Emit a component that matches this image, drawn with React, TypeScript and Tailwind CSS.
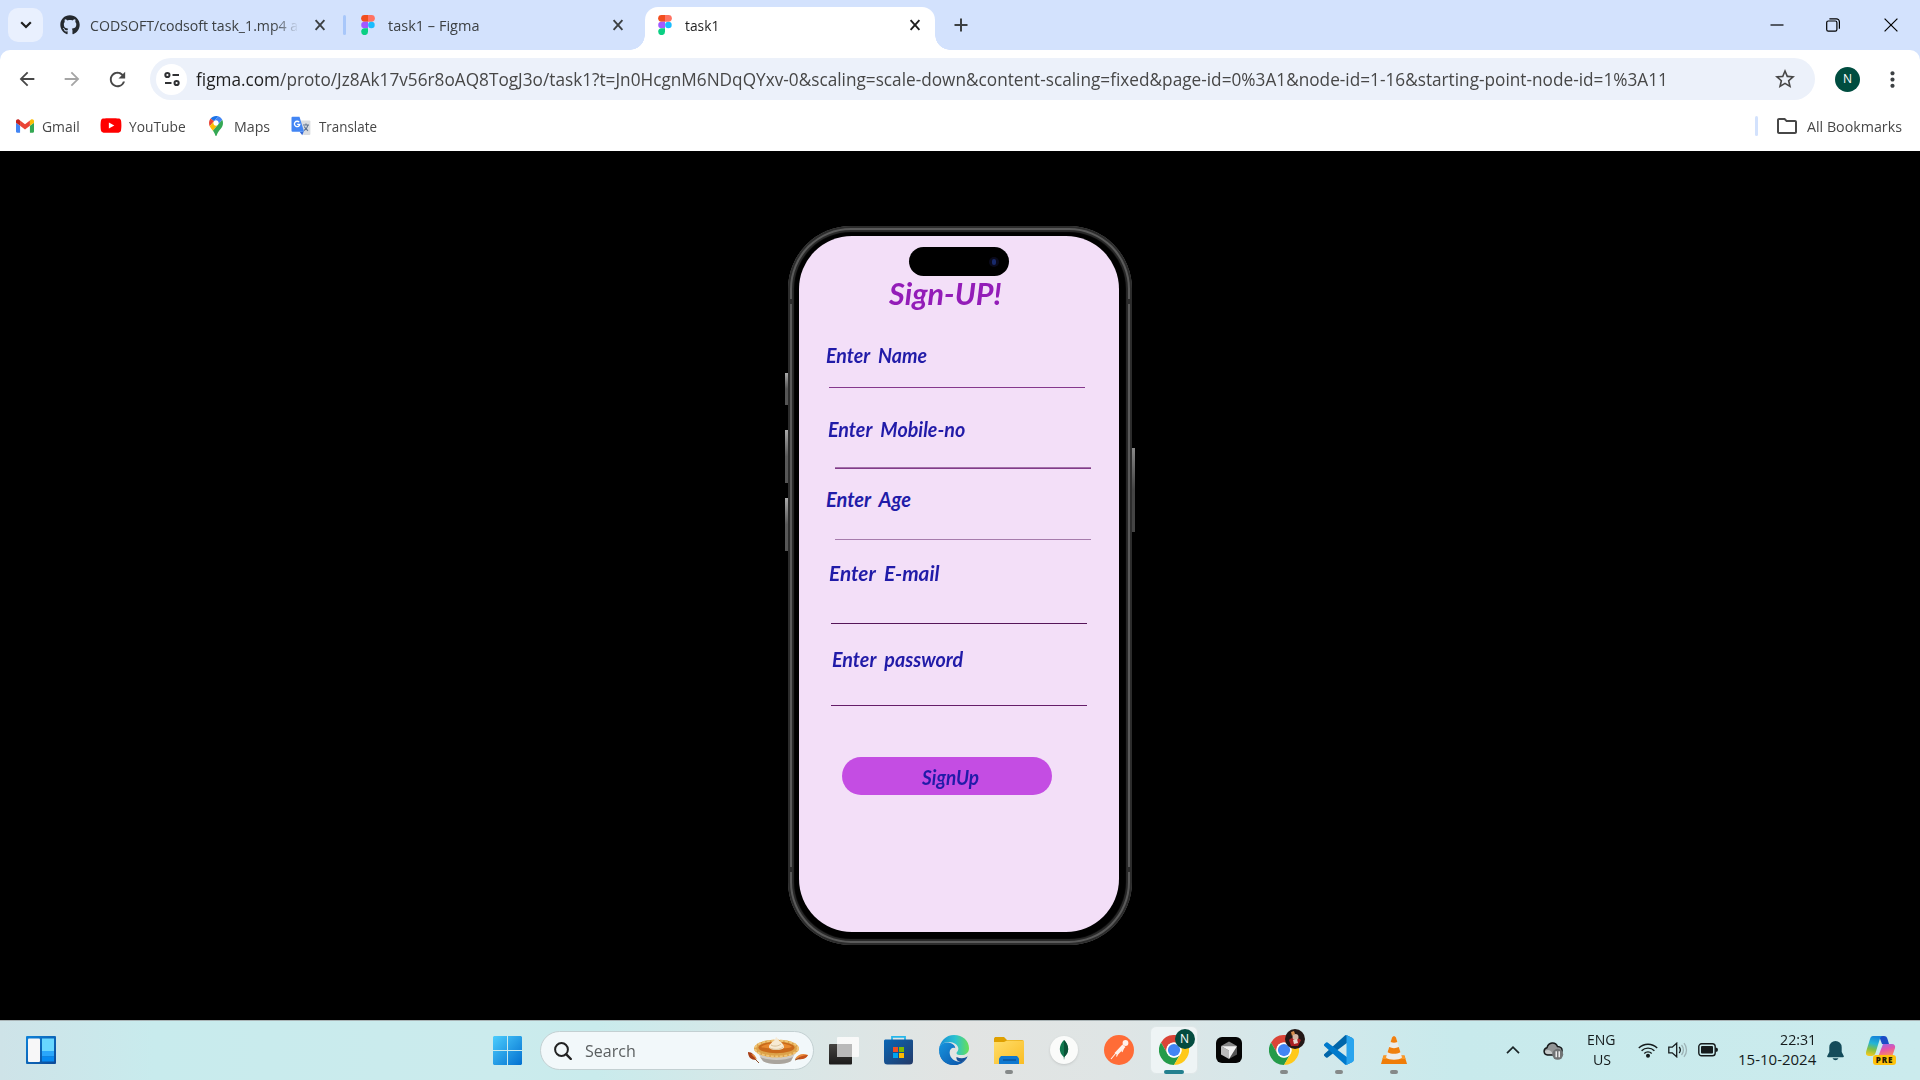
import React, { useLayoutEffect, useRef, useState } from "react";
import { FaGithub, FaYoutube } from "react-icons/fa";
import { MdStarBorder, MdMoreVert, MdArrowBack, MdArrowForward, MdRefresh, MdOutlineFolder } from "react-icons/md";

/* Single line of text squeezed or stretched horizontally to a fixed width. */
function Fit({ w, className = "", children }: { w: number; className?: string; children: React.ReactNode }) {
  const ref = useRef<HTMLSpanElement>(null);
  const [scale, setScale] = useState(1);
  useLayoutEffect(() => {
    const measure = () => {
      if (ref.current && ref.current.offsetWidth) setScale(w / ref.current.offsetWidth);
    };
    measure();
    document.fonts?.ready.then(measure);
  }, [w]);
  return (
    <span className={`block shrink-0 ${className}`} style={{ width: w }}>
      <span ref={ref} className="inline-block origin-left whitespace-nowrap" style={{ transform: `scaleX(${scale})` }}>
        {children}
      </span>
    </span>
  );
}

function FigmaIcon() {
  return (
    <svg viewBox="0 0 14 20" className="h-5 w-3.5 shrink-0">
      <path fill="#f24e1e" d="M3.5 0H7v6.7H3.5a3.35 3.35 0 0 1 0-6.7z" />
      <path fill="#ff7262" d="M7 0h3.5a3.35 3.35 0 0 1 0 6.7H7z" />
      <path fill="#a259ff" d="M3.5 6.7H7v6.6H3.5a3.3 3.3 0 0 1 0-6.6z" />
      <circle fill="#1abcfe" cx="10.4" cy="10" r="3.3" />
      <path fill="#0acf83" d="M3.5 13.3H7v3.3a3.4 3.4 0 1 1-3.5-3.3z" />
    </svg>
  );
}

function Cross({ className = "" }: { className?: string }) {
  return (
    <svg viewBox="0 0 12 12" className={`h-3 w-3 shrink-0 ${className}`} stroke="currentColor" strokeWidth="1.9">
      <path d="M1.6 1.2l8.8 9.6M10.400 1.2l-8.8 9.6" />
    </svg>
  );
}

function TabStrip() {
  return (
    <div className="flex h-[50px] items-start bg-[#d3e2fd] text-[15px] leading-[20px] text-[#3c4043]">
      <div className="ml-2 mt-2 flex h-[34px] w-[35px] items-center justify-center rounded-[10px] bg-[#e9f0fe]">
        <svg viewBox="0 0 12 8" className="h-2 w-3" fill="none" stroke="#1f1f1f" strokeWidth="2.2">
          <path d="M1.2 1.2L6 6l4.8-4.8" />
        </svg>
      </div>
      <div className="ml-[17px] flex h-[50px] w-[283px] items-center">
        <FaGithub className="h-5 w-5 shrink-0 text-[#24292f]" />
        <div className="ml-[10px] w-[209px] overflow-hidden [mask-image:linear-gradient(to_right,black_88%,transparent)]">
          <Fit w={213}>CODSOFT/codsoft task_1.mp4 at</Fit>
        </div>
        <Cross className="ml-[15px]" />
      </div>
      <div className="mt-[15px] h-5 w-[3px] rounded-full bg-[#a8c7fa]" />
      <div className="ml-[15px] flex h-[50px] w-[284px] items-center">
        <FigmaIcon />
        <Fit w={91} className="ml-[13px]">task1 – Figma</Fit>
        <Cross className="ml-[133px]" />
      </div>
      <div className="flex h-[50px] items-end">
        <div className="-ml-[15px] h-[15px] w-[15px] bg-[radial-gradient(circle_at_0_0,transparent_14.5px,white_15px)]" />
        <div className="flex h-[43px] w-[290px] items-center rounded-t-[13px] bg-white pb-[7px] text-[#1f1f1f]">
          <div className="ml-[13px] flex">
            <FigmaIcon />
          </div>
          <Fit w={34} className="ml-[13px]">task1</Fit>
          <Cross className="ml-[190px]" />
        </div>
        <div className="h-[15px] w-[15px] bg-[radial-gradient(circle_at_100%_0,transparent_14.5px,white_15px)]" />
      </div>
      <svg viewBox="0 0 14 14" className="ml-1 mt-[18px] h-3.5 w-3.5" stroke="#3c4043" strokeWidth="2">
        <path d="M7 .5v13M.5 7h13" />
      </svg>
      <div className="ml-auto mr-[22px] flex h-[49px] items-center text-black">
        <svg viewBox="0 0 14 14" className="h-3.5 w-3.5" stroke="currentColor" strokeWidth="1.2">
          <path d="M0.500 7h13" />
        </svg>
        <svg viewBox="0 0 14 14" className="ml-[42px] h-3.5 w-3.5" fill="none" stroke="currentColor" strokeWidth="1.2">
          <rect x=".7" y="3" width="10.2" height="10.2" rx="1.6" />
          <path d="M3.4 .8h7a3 3 0 0 1 3 3v7" />
        </svg>
        <svg viewBox="0 0 14 14" className="ml-[44px] h-3.5 w-3.5" stroke="currentColor" strokeWidth="1.2">
          <path d="M.6.6l12.8 12.8M13.4.6L.6 13.4" />
        </svg>
      </div>
    </div>
  );
}

function AddressBar() {
  return (
    <div className="bg-[#d3e2fd]">
      <div className="flex h-[58px] items-center rounded-t-[10px] bg-white text-[#474747]">
        <MdArrowBack className="ml-4 h-[22px] w-[22px]" />
        <MdArrowForward className="ml-[23px] h-[22px] w-[22px] text-[#a5a5a5]" />
        <MdRefresh className="ml-[23px] h-[23px] w-[23px]" />
        <div className="ml-[21px] flex h-[42px] w-[1665px] items-center rounded-full bg-[#ecf1fa]">
          <div className="ml-[6px] flex h-[31px] w-[31px] items-center justify-center rounded-full bg-white">
            <svg viewBox="0 0 16 16" className="h-4 w-4" fill="none" stroke="#303134" strokeWidth="2">
              <circle cx="3.4" cy="4" r="2.1" />
              <path d="M8.5 4H15M1 12h6.5" />
              <circle cx="12.6" cy="12" r="2.1" />
            </svg>
          </div>
          <Fit w={1472} className="ml-[9px] text-[18px] leading-[24px]">
            <span className="text-[#1f1f1f]">figma.com</span>
            /proto/Jz8Ak17v56r8oAQ8TogJ3o/task1?t=Jn0HcgnM6NDqQYxv-0&amp;scaling=scale-down&amp;content-scaling=fixed&amp;page-id=0%3A1&amp;node-id=1-16&amp;starting-point-node-id=1%3A11
          </Fit>
          <MdStarBorder className="ml-[105px] h-6 w-6" />
        </div>
        <div className="ml-5 flex h-[25px] w-[25px] items-center justify-center rounded-full bg-[#004d40] text-[12px] text-white">N</div>
        <MdMoreVert className="ml-5 h-[25px] w-[25px] text-[#3c4043]" />
      </div>
    </div>
  );
}

function GmailIcon() {
  return (
    <svg viewBox="52 42 88 66" className="h-3.5 w-[18px]">
      <path fill="#4285f4" d="M58 108h14V74L52 59v43c0 3.32 2.69 6 6 6" />
      <path fill="#34a853" d="M120 108h14c3.32 0 6-2.69 6-6V59l-20 15" />
      <path fill="#fbbc04" d="M120 48v26l20-15v-8c0-7.42-8.47-11.65-14.4-7.2" />
      <path fill="#ea4335" d="M72 74V48l24 18 24-18v26L96 92" />
      <path fill="#c5221f" d="M52 51v8l20 15V48l-5.6-4.2c-5.94-4.45-14.4-.22-14.4 7.2" />
    </svg>
  );
}

function MapsIcon() {
  return (
    <svg viewBox="0 0 92.3 132.3" className="h-5 w-3.5">
      <path fill="#1a73e8" d="M60.2 2.2C55.8.8 51 0 46.1 0 32 0 19.3 6.4 10.8 16.5l21.8 18.3L60.2 2.2z" />
      <path fill="#ea4335" d="M10.8 16.5C4.1 24.5 0 34.9 0 46.1c0 8.7 1.7 15.7 4.6 22l28-33.3-21.8-18.3z" />
      <path fill="#4285f4" d="M46.2 28.5c9.8 0 17.7 7.9 17.7 17.7 0 4.3-1.6 8.3-4.2 11.4 0 0 13.9-16.6 27.5-32.7-5.6-10.8-15.3-19-27-22.7L32.6 34.8c3.3-3.8 8.1-6.3 13.6-6.3" />
      <path fill="#fbbc04" d="M46.2 63.8c-9.8 0-17.7-7.9-17.7-17.7 0-4.3 1.5-8.3 4.1-11.3l-28 33.3c4.8 10.6 12.8 19.2 21 29.9l34.1-40.5c-3.3 3.9-8.1 6.3-13.5 6.3" />
      <path fill="#34a853" d="M59.1 109.2c15.4-24.1 33.3-35 33.3-63 0-7.7-1.9-14.9-5.2-21.3L25.6 98c2.6 3.4 5.3 7.3 7.9 11.3 9.4 14.5 6.8 23.1 12.8 23.1s3.4-8.7 12.8-23.2" />
    </svg>
  );
}

function TranslateIcon() {
  return (
    <svg viewBox="0 0 20 20" className="h-5 w-5" fill="none">
      <path fill="#dadce0" d="M8 4.5h10.4a1 1 0 0 1 1 1V18a1 1 0 0 1-1 1h-6z" />
      <path stroke="#5f7390" strokeWidth="1.1" d="M12 9h6M15 7.6V9M17 9.2c-.6 2.6-2.300 4.300-4 5.200M13.300 10.500c.8 1.800 2 3 3.700 4.200" />
      <path fill="#3367d6" d="M8.600 15.800h4L11.300 19.300z" />
      <path fill="#4285f4" d="M1.500.8h7l4.600 15H1.500a1 1 0 0 1-1-1v-13a1 1 0 0 1 1-1z" />
      <path stroke="#fff" strokeWidth="1.300" d="M8.200 6.200a2.700 2.700 0 1 0 .6 2.200H6.200" />
    </svg>
  );
}

function Bookmarks() {
  return (
    <div className="flex h-[43px] items-center bg-white pb-[8px] text-[15px] leading-[20px] text-[#474747]">
      <div className="ml-4"><GmailIcon /></div>
      <Fit w={38} className="ml-2">Gmail</Fit>
      <FaYoutube className="ml-[20px] h-[21px] w-[22px] text-[#ff0000]" />
      <Fit w={57} className="ml-[7px]">YouTube</Fit>
      <div className="ml-[23px]"><MapsIcon /></div>
      <Fit w={36} className="ml-[11px]">Maps</Fit>
      <div className="ml-[21px]"><TranslateIcon /></div>
      <Fit w={58} className="ml-2">Translate</Fit>
      <div className="ml-auto h-5 w-[3px] rounded-full bg-[#d3e2fd]" />
      <MdOutlineFolder className="ml-[17px] h-6 w-6" />
      <Fit w={95} className="ml-2 mr-[18px]">All Bookmarks</Fit>
    </div>
  );
}

function Label({ w, className, children }: { w: number; className: string; children: string }) {
  return (
    <Fit w={w} className={`h-6 text-[20px] font-bold italic leading-6 text-[#211ba8] [word-spacing:4px] ${className}`}>
      {children}
    </Fit>
  );
}

function Phone() {
  return (
    <div className="relative mt-[75px] h-[719px] w-[344px] rounded-[63px] bg-black shadow-[inset_0_0_0_2px_#2c2c2c,inset_0_0_0_4px_#5a5a5a,inset_0_0_1px_6px_#2a2a2a]">
      <div className="absolute -left-[3px] top-[147px] h-8 w-[3px] bg-linear-to-b from-[#aaa] via-[#555] to-[#555]" />
      <div className="absolute -left-[3px] top-[204px] h-[53px] w-[3px] bg-linear-to-b from-[#aaa] via-[#5a5a5a] to-[#555]" />
      <div className="absolute -left-[3px] top-[272px] h-[53px] w-[3px] bg-linear-to-b from-[#aaa] via-[#5a5a5a] to-[#555]" />
      <div className="absolute -right-[3px] top-[222px] h-[84px] w-[3px] bg-linear-to-b from-[#888] via-[#444] to-[#444]" />
      <div className="absolute left-0 top-[73px] h-[5px] w-[5px] bg-[#2c2c2c]" />
      <div className="absolute right-0 top-[73px] h-[5px] w-[5px] bg-[#2c2c2c]" />
      <div className="absolute bottom-[73px] left-0 h-[5px] w-[5px] bg-[#2c2c2c]" />
      <div className="absolute bottom-[73px] right-0 h-[5px] w-[5px] bg-[#2c2c2c]" />
      <div className="ml-[11px] mt-[10px] flex h-[696px] w-[320px] flex-col overflow-hidden rounded-[53px] bg-[#f3dff8] font-[Lato,sans-serif]">
        <div className="ml-[110px] mt-[11px] flex h-[29px] w-[100px] shrink-0 items-center justify-end rounded-full bg-black pr-[10px]">
          <div className="flex h-2.5 w-2.5 items-center justify-center rounded-full bg-[#0a0a1c]">
            <div className="h-1.5 w-1 rounded-full bg-[#182a6b]" />
          </div>
        </div>
        <Fit w={113} className="ml-[90px] mt-[-1px] h-9 text-[30px] font-bold italic leading-9 text-[#931cb8]">Sign-UP!</Fit>
        <Label w={101} className="ml-[27px] mt-[32px]">Enter Name</Label>
        <div className="ml-[30px] mt-[20px] h-px w-64 shrink-0 bg-[#85388d]" />
        <Label w={137} className="ml-[29px] mt-[29px]">Enter Mobile-no</Label>
        <div className="ml-[36px] mt-[26px] h-[2px] w-64 shrink-0 bg-linear-to-b from-[#b48aba] to-[#701c79]" />
        <Label w={85} className="ml-[27px] mt-[18px]">Enter Age</Label>
        <div className="ml-[36px] mt-[28px] h-px w-64 shrink-0 bg-[#a67bad]" />
        <Label w={110} className="ml-[30px] mt-[21px]">Enter E-mail</Label>
        <div className="ml-[32px] mt-[38px] h-px w-64 shrink-0 bg-[#551559]" />
        <Label w={131} className="ml-[33px] mt-[23px]">Enter password</Label>
        <div className="ml-[32px] mt-[34px] h-px w-64 shrink-0 bg-[#651d69]" />
        <div className="ml-[43px] mt-[51px] flex h-[38px] w-[210px] shrink-0 justify-center rounded-full bg-[#c44de3] pl-[7px]">
          <Label w={57} className="mt-[8px]">SignUp</Label>
        </div>
      </div>
    </div>
  );
}

function Chrome({ children }: { children: React.ReactNode }) {
  return (
    <div className="relative">
      <svg viewBox="0 0 48 48" className="h-[30px] w-[30px]">
        <path fill="#db4437" d="M3.2 12A24 24 0 0 1 44.8 12H24A12 12 0 0 0 13.600 30Z" />
        <path fill="#249b49" d="M3.200 12L13.600 30A12 12 0 0 0 34.400 30L24 48A24 24 0 0 1 3.200 12Z" />
        <path fill="#ffc91a" d="M44.800 12A24 24 0 0 1 24 48L34.400 30A12 12 0 0 0 24 12Z" />
        <circle cx="24" cy="24" r="12.200" fill="#fff" />
        <circle cx="24" cy="24" r="9.800" fill="#4285f4" />
      </svg>
      <div className="absolute -right-[6px] -top-[6px]">{children}</div>
    </div>
  );
}

function Dock({ children, state }: { children: React.ReactNode; state?: "open" | "active" }) {
  return (
    <div className="relative flex h-[58px] w-[55px] shrink-0 items-center justify-center">
      {state === "active" && <div className="absolute left-[4px] top-[5px] h-12 w-12 rounded-md border border-[#dfe7e8] bg-[#eef4f5]" />}
      <div className="relative">{children}</div>
      {state === "open" && <div className="absolute bottom-[5px] h-1 w-2 rounded-full bg-[#858989]" />}
      {state === "active" && <div className="absolute bottom-[5px] h-1 w-5 rounded-full bg-[#23808f]" />}
    </div>
  );
}

function Pie() {
  return (
    <svg viewBox="0 0 62 30" className="h-[30px] w-[62px]">
      <path fill="#a83e16" d="M1 16c4 0 7 3 8 8-5 0-8-3-8-8z" />
      <path fill="#e98a3b" d="M4 18c3 0 5 2 6 6M48 23c3-5 8-6 13-4-2 4-7 5-13 4z" />
      <path fill="#c4521b" d="M50 23c3-3 7-4 11-4-2 4-6 5-11 4z" />
      <path stroke="#8b4b28" d="M8 23l4 4M48 24l5-2" />
      <path fill="#cfcac3" d="M9 14h41l-6 11c-5 4-23 4-28 0z" />
      <path fill="#a9a49d" d="M13 21c8 4 25 4 33 0l-2 4c-5 4-23 4-28 0z" />
      <ellipse cx="29.500" cy="12.500" rx="22.500" ry="8.800" fill="#dca24a" />
      <ellipse cx="29.500" cy="12.500" rx="21.500" ry="8" fill="none" stroke="#f1c576" strokeWidth="2" strokeDasharray="3 1.500" />
      <ellipse cx="29.500" cy="11.500" rx="18" ry="5.800" fill="#c96a1c" />
      <path fill="#e8892f" d="M14 11c5-5 26-5 31 0-5 2-26 2-31 0z" />
      <path fill="#f7ead3" d="M22 11c0-3 2-3 3-5 2-1 3-2 4-5 3 2 2 4 5 5 1 1 3 3 3 5 0 4-15 4-15 0z" />
      <path stroke="#d8c29b" fill="none" d="M24 9c3 2 8 1 10-1M23 12c4 2 10 2 13-1" />
    </svg>
  );
}

function Taskbar() {
  return (
    <div className="flex h-[60px] border-t border-[#a9b3b5] bg-[linear-gradient(90deg,#cee3e8_0,#c8ebed_8%,#cbebed_26%,#c9ebec_31%,#d8e7e7_40%,#e2e4e3_50%,#dfe5e5_58%,#d3e8eb_68%,#c8eaec_76%,#cbebed_100%)]">
      <svg viewBox="0 0 30 28" className="ml-[26px] mt-[15px] h-7 w-[30px]">
        <defs>
          <linearGradient id="wg" x1="0" y1="0" x2="1" y2="1"><stop stopColor="#0d82d9" /><stop offset="1" stopColor="#0c4a97" /></linearGradient>
        </defs>
        <rect width="30" height="28" rx="1" fill="url(#wg)" />
        <rect x="2" y="2.500" width="12" height="23.500" rx="1" fill="#f7f7f8" />
        <rect x="16" y="2.500" width="12" height="12.500" fill="#68d7ff" />
        <rect x="16" y="15" width="12" height="5.500" fill="#2aa7fb" />
        <rect x="16" y="20.500" width="12" height="5" fill="#078af0" />
      </svg>
      <svg viewBox="0 0 29 29" className="ml-[437px] mt-[15px] h-[29px] w-[29px]">
        <defs>
          <linearGradient id="sg" gradientUnits="userSpaceOnUse" x1="0" y1="0" x2="29" y2="29"><stop stopColor="#4ccdfd" /><stop offset="1" stopColor="#0270d0" /></linearGradient>
        </defs>
        <path fill="url(#sg)" d="M1 0h13v14H0V1zM15 0h13l1 1v13H15zM0 15h14v14H1l-1-1zM15 15h14v13l-1 1H15z" />
      </svg>
      <div className="ml-[18px] mt-[10px] flex h-[39px] w-[274px] items-center rounded-full border border-[#c3d0d2] bg-[#f2f8fa]">
        <svg viewBox="0 0 18 18" className="ml-[13px] h-[18px] w-[18px]" fill="none" stroke="#222" strokeWidth="2">
          <circle cx="7.500" cy="7.500" r="6.400" />
          <path strokeWidth="2.400" strokeLinecap="round" d="M12.300 12.300l4.500 4.700" />
        </svg>
        <Fit w={51} className="ml-[13px] text-[17px] leading-6 text-[#5b5f60]">Search</Fit>
        <div className="ml-[111px]"><Pie /></div>
      </div>
      <div className="ml-[2px] flex">
        <Dock>
          <svg viewBox="0 0 30 29" className="h-[29px] w-[30px]">
            <defs>
              <linearGradient id="tg" x2="0" y2="1"><stop stopColor="#454341" /><stop offset="1" stopColor="#1c1b1a" /></linearGradient>
            </defs>
            <rect y="8" width="23" height="20.500" rx="1" fill="url(#tg)" />
            <rect x="8" y="1" width="22" height="20" rx="1" fill="#fafafa" fillOpacity=".93" />
            <rect x="8" y="8" width="15" height="13" fill="#b9b9b9" />
          </svg>
        </Dock>
        <Dock>
          <svg viewBox="0 0 29 30" className="h-[30px] w-[29px]">
            <defs>
              <linearGradient id="stg" x2="1" y2="1"><stop stopColor="#0a66b5" /><stop offset="1" stopColor="#243a68" /></linearGradient>
            </defs>
            <path d="M8 6V1.800h13V6" fill="none" stroke="#26b6ea" strokeWidth="1.800" />
            <path fill="url(#stg)" d="M1 4.500h27l1 1V26a3.500 3.500 0 0 1-3.500 3.500h-22A3.500 3.500 0 0 1 0 26V5.500z" />
            <path fill="#f25022" d="M9 12h5v5H9z" />
            <path fill="#7fba00" d="M15 12h5v5h-5z" />
            <path fill="#00a4ef" d="M9 18h5v5H9z" />
            <path fill="#ffb900" d="M15 18h5v5h-5z" />
          </svg>
        </Dock>
        <Dock>
          <svg viewBox="0 0 48 48" className="h-[30px] w-[30px]">
            <defs>
              <linearGradient id="eg1" x1="0" x2="1"><stop stopColor="#168bd8" /><stop offset=".55" stopColor="#2bc2cf" /><stop offset="1" stopColor="#68df55" /></linearGradient>
              <linearGradient id="eg2" x2="1" y2="1"><stop stopColor="#1795df" /><stop offset="1" stopColor="#0c55aa" /></linearGradient>
            </defs>
            <path fill="#125ba9" d="M20 18c-6 5-7 14-2 21 6 8 18 8 27-3-4 8-12 12-21 12C10 48 1 38 1 27z" />
            <path fill="url(#eg2)" d="M0 24c0-8 6-12 13-12 7 0 13 4 13 9-4-2-9 1-9 7 0 10 10 16 20 15-3 3-8 5-13 5C10 48 0 38 0 24z" />
            <path fill="url(#eg1)" d="M0 24C1 10 11 0 24 0c14 0 24 9 24 21 0 7-5 11-12 11-5 0-8-1-8-3s3-3 3-7c0-6-7-11-15-11C7 11 1 16 0 24z" />
            <path fill="#174f96" d="M28 35c6 3 13 3 18-1-2 4-5 7-9 9-6 0-10-3-9-8z" />
          </svg>
        </Dock>
        <Dock state="open">
          <svg viewBox="0 0 30 27" className="h-[27px] w-[30px]">
            <defs>
              <linearGradient id="fg" x2="1" y2="1"><stop stopColor="#ffdd69" /><stop offset="1" stopColor="#fabd25" /></linearGradient>
            </defs>
            <path fill="#dfa000" d="M0 1.500L1 0h9l3 3h15.500L30 5H0z" />
            <path fill="url(#fg)" d="M0 5h10l3-1.500h17V27H0z" />
            <path fill="#0f78d0" d="M5 27v-5.500L7 19h16l2 2.500V27z" />
            <path stroke="#0a4c8d" strokeWidth="1.200" d="M9 23h13" />
          </svg>
        </Dock>
        <Dock>
          <div className="flex h-7 w-7 items-center justify-center rounded-full bg-[#fafbfa] shadow-sm">
            <svg viewBox="0 0 10 20" className="h-5 w-2.5">
              <path fill="#10784f" d="M5 0c5 5 6 12 .3 17L5 20l-.3-3C-1 12 0 5 5 0z" />
              <path fill="#0a5237" d="M5 0c5 5 6 12 .3 17L5 20z" />
            </svg>
          </div>
        </Dock>
        <Dock>
          <svg viewBox="0 0 30 30" className="h-[30px] w-[30px]">
            <circle cx="15" cy="15" r="15" fill="#ff6c37" />
            <circle cx="21.500" cy="8" r="2.900" fill="#fff2ec" />
            <path fill="#fff2ec" d="M18.500 9.500l3 2.500-8 8-3-2z" />
            <path stroke="#fff2ec" strokeWidth="1.100" fill="none" d="M12 18l-5 6M14 18l-1.500 3.500M20 12l-2 5" />
          </svg>
        </Dock>
        <Dock state="active">
          <Chrome>
            <div className="flex h-5 w-5 items-center justify-center rounded-full bg-[#054c40] text-[12px] leading-5 text-white">N</div>
          </Chrome>
        </Dock>
        <Dock>
          <svg viewBox="0 0 26 26" className="h-[26px] w-[26px]">
            <rect width="26" height="26" rx="6" fill="#050505" />
            <path fill="#858585" d="M13 4.500l8 4.500-8 4.500L5 9z" />
            <path fill="#bababa" d="M5 9l8 4.500v8.500l-8-4.500z" />
            <path fill="#555" d="M21 9v8.500L13 22v-8.500z" />
            <path fill="#f1f1f1" d="M5.500 9.300H21L13 22v-8.500z" />
          </svg>
        </Dock>
        <Dock state="open">
          <Chrome>
            <svg viewBox="0 0 20 20" className="h-5 w-5">
              <circle cx="10" cy="10" r="10" fill="#241817" />
              <path fill="#a92022" d="M4 11c2-3 9-3 12 0l-3 6H6z" />
              <path fill="#d98d4c" d="M6 3l3-1 1 3-3 2z" />
              <circle cx="10.500" cy="8" r="3" fill="#d6b7a5" />
              <path fill="#e7d8cf" d="M8 11l4-1 1 4-4 1z" />
            </svg>
          </Chrome>
        </Dock>
        <Dock state="open">
          <svg viewBox="0 0 100 100" className="h-[30px] w-[30px]">
            <path fill="#0065a9" d="M96.500 10.800L75.900.9a6.200 6.200 0 0 0-7.100 1.200L1.300 63.600a4.200 4.200 0 0 0 0 6.200l5.500 5a4.200 4.200 0 0 0 5.300.2L75 27.300z" />
            <path fill="#007acc" d="M96.500 89.200l-20.600 9.900a6.200 6.200 0 0 1-7.100-1.200L1.300 36.400a4.200 4.200 0 0 1 0-6.200l5.500-5a4.200 4.200 0 0 1 5.300-.2L75 72.700z" />
            <path fill="#29a4ee" d="M75.900 99.100a6.200 6.200 0 0 1-7.100-1.200c2.300 2.300 6.200.7 6.200-2.600V4.700c0-3.300-3.900-4.900-6.200-2.600A6.200 6.200 0 0 1 75.900.9l20.600 9.900a6.300 6.300 0 0 1 3.500 5.600v67.200a6.300 6.300 0 0 1-3.500 5.600z" />
          </svg>
        </Dock>
        <Dock state="open">
          <svg viewBox="0 0 26 28" className="h-7 w-[26px]">
            <path fill="#ef7d08" d="M2.500 19.500h21L26 28H0z" />
            <path fill="#f99a2a" d="M2.500 19.500h21l1 3.500h-23z" />
            <path fill="#ececec" d="M11 1.500q2-3 4 0l6 20c-3 3-13 3-16 0z" />
            <path fill="#f08010" d="M11 1.500q2-3 4 0L16.300 6c-2 1-4.600 1-6.600 0zM8.200 11c3 1.500 6.600 1.500 9.600 0l1.600 5.200c-4 2-8.800 2-12.800 0z" />
          </svg>
        </Dock>
      </div>
      <svg viewBox="0 0 14 8" className="ml-[85px] mt-[25px] h-2 w-3.5" fill="none" stroke="#1b2527" strokeWidth="1.700">
        <path d="M1 7.200l6-6 6 6" />
      </svg>
      <svg viewBox="0 0 21 18" className="ml-[23px] mt-[21px] h-[18px] w-[21px]">
        <path fill="#929596" stroke="#171b1c" strokeWidth="1.500" d="M4.500 13A3.700 3.700 0 0 1 4 5.700C5.500 0 12.500-.5 14.500 4.500c3 0 5 2 4.500 4.500l-1 4z" />
        <path fill="#c6caca" d="M2 9c3-2 6-1 8 3H5c-2 0-3-1-3-3z" />
        <circle cx="14.700" cy="12.300" r="5.500" fill="#707374" />
        <path stroke="#fff" strokeWidth="1.300" d="M13.200 9.300v6M16.200 9.300v6" />
      </svg>
      <div className="ml-[23px] mt-[8px] flex w-[29px] flex-col items-center text-[15px] leading-5 text-[#151b1c]">
        <Fit w={29}>ENG</Fit>
        <Fit w={18}>US</Fit>
      </div>
      <svg viewBox="0 0 20 16" className="ml-[22px] mt-[21px] h-4 w-5" fill="none" stroke="#151b1c" strokeWidth="1.400">
        <path d="M.8 6a13 13 0 0 1 18.400 0M3.600 8.800a9 9 0 0 1 12.800 0M6.300 11.400a5.200 5.200 0 0 1 7.400 0" />
        <circle cx="10" cy="13.700" r="1.300" fill="#151b1c" />
      </svg>
      <svg viewBox="0 0 20 16" className="ml-[10px] mt-[21px] h-4 w-5" fill="none" stroke="#151b1c" strokeWidth="1.300">
        <path d="M.8 5.200h3.400L8.700 1.200v13.600l-4.500-4H.8z" />
        <path d="M11.200 5a5 5 0 0 1 0 6" />
        <path stroke="#9db2b5" d="M13.500 3a7.500 7.500 0 0 1 0 10M16 1.200a10.500 10.500 0 0 1 0 13.600" />
      </svg>
      <svg viewBox="0 0 20 14" className="ml-[10px] mt-[22px] h-3.5 w-5">
        <rect x=".8" y=".8" width="16.400" height="12" rx="2.800" fill="none" stroke="#151b1c" strokeWidth="1.400" />
        <rect x="3" y="3" width="12" height="7.600" rx="1" fill="#151b1c" />
        <path fill="#151b1c" d="M17.500 4.500q2.500 0 2.500 2.300t-2.500 2.300z" />
      </svg>
      <div className="ml-[20px] mt-[8px] flex w-[78px] flex-col items-end text-[15px] leading-5 text-[#151b1c]">
        <Fit w={36}>22:31</Fit>
        <Fit w={78}>15-10-2024</Fit>
      </div>
      <svg viewBox="0 0 17 20" className="ml-[11px] mt-[20px] h-5 w-[17px] text-[#144b5a]" fill="currentColor">
        <path d="M8.500 0a6.200 6.200 0 0 1 6.200 6.200V11l2.200 4.200q0 1-1 1H1.100q-1 0-1-1L2.300 11V6.200A6.200 6.200 0 0 1 8.500 0zM5.500 17.300h6q-1 2-3 2t-3-2z" />
      </svg>
      <div className="relative ml-[22px] mt-[15px] h-7 w-[30px]">
        <svg viewBox="0 0 30 28" className="h-7 w-[30px]">
          <defs>
            <linearGradient id="c1" x1=".4" y1="0" x2=".2" y2="1"><stop stopColor="#1686d9" /><stop offset=".35" stopColor="#23b5d5" /><stop offset=".65" stopColor="#82bf43" /><stop offset="1" stopColor="#fcca1c" /></linearGradient>
            <linearGradient id="c2" x2=".3" y2="1"><stop stopColor="#9569eb" /><stop offset=".5" stopColor="#e455aa" /><stop offset="1" stopColor="#fb8b60" /></linearGradient>
          </defs>
          <path fill="#1b4cc6" d="M13 0h5c2 0 3 1 3.500 3l1.500 5h-7z" />
          <path fill="url(#c2)" d="M17 8h9c2.500 0 3.500 2 3 4l-3 9H12z" />
          <path fill="url(#c1)" d="M7 0h10c-2 0-3 2-3.500 4L9.500 17c-.6 2-2 3-4 3H3c-3 0-3.500-2-2.700-5L4 3c.6-2 1.500-3 3-3z" />
        </svg>
        <div className="absolute bottom-[-1px] left-[7px] flex h-[10px] w-[23px] items-center justify-center rounded-[3px] bg-[#ffc20c] text-[8px] font-extrabold leading-none tracking-[0.8px] text-[#241b02]">PRE</div>
      </div>
    </div>
  );
}

export default function App() {
  return (
    <div className="flex h-[1080px] w-[1920px] flex-col overflow-hidden bg-black font-['Open_Sans',sans-serif]">
      <TabStrip />
      <AddressBar />
      <Bookmarks />
      <div className="flex h-[869px] justify-center bg-black">
        <Phone />
      </div>
      <Taskbar />
    </div>
  );
}
